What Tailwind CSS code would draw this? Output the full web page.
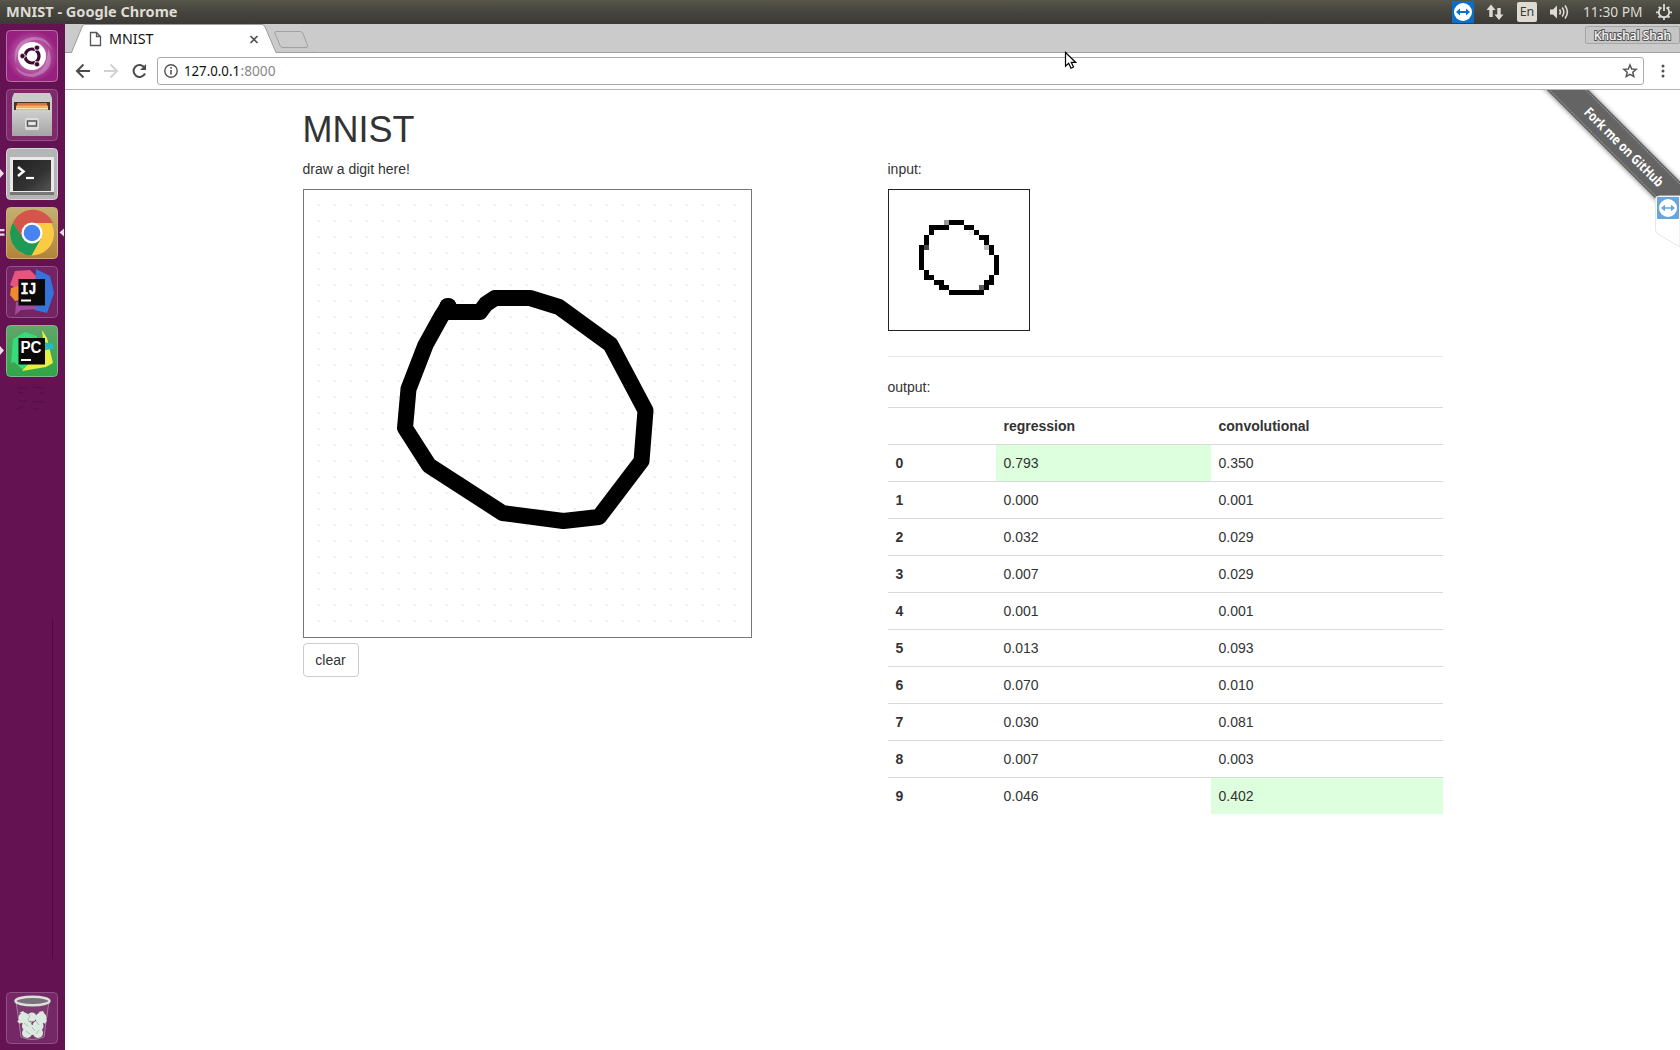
<!DOCTYPE html>
<html lang="en">
<head>
<meta charset="utf-8">
<title>MNIST</title>
<script src="https://cdn.jsdelivr.net/npm/@tailwindcss/browser@4"></script>
</head>
<body class="relative flex h-[1050px] w-[1680px] flex-col overflow-hidden bg-white font-['Liberation_Sans',sans-serif] text-sm text-[#333]">

<!-- Desktop panel -->
<header class="flex h-6 shrink-0 items-center justify-between bg-linear-to-b from-[#58564b] via-[#45443e] to-[#3b3a36] pl-[6px] pr-[7px] font-['Noto_Sans',sans-serif] text-[#dfdbd2]">
  <svg class="h-6 w-[180px]" viewBox="0 0 180 24"><text x="0" y="17" font-size="14" font-weight="700" fill="#dfdbd2" textLength="171.500" lengthAdjust="spacingAndGlyphs">MNIST - Google Chrome</text></svg>
  <div class="flex h-6 items-center">
    <svg class="mr-[12px] h-[22px] w-[22px]" viewBox="0 0 22 22"><rect width="22" height="22" fill="#0b6fc7"/><circle cx="11" cy="11" r="9" fill="#fff"/><path d="M4 11l4-3.400v2.400h6V7.600l4 3.400-4 3.400V12H8v2.400z" fill="#0b6fc7"/></svg>
    <svg class="mr-[13px] h-5 w-[18px]" viewBox="0 0 18 20" fill="#dfdbd2"><path d="M5 2.500L9.500 8H6.700v7H3.300V8H.500zM13 18L8.500 12.500h2.800V6h3.400v6.500h2.800z"/></svg>
    <div class="mr-[12px] flex h-5 w-5 items-center justify-center rounded-[2px] bg-[#dfdbd2] text-[12.500px] text-[#3c3b37]">En</div>
    <svg class="mr-[14px] h-5 w-5" viewBox="0 0 20 20" fill="none" stroke="#dfdbd2" stroke-width="1.600"><path d="M1 7.500h3l4-4v13l-4-4H1z" fill="#dfdbd2" stroke="none"/><path d="M10.500 7.500q1.800 2.500 0 5M13.200 5.500q3.300 4.500 0 9M16 3.500q4.800 6.500 0 13"/></svg>
    <svg class="mr-[12px] h-6 w-[60px]" viewBox="0 0 60 24"><text x="0" y="17" font-size="14" fill="#dfdbd2" textLength="59.500" lengthAdjust="spacingAndGlyphs">11:30 PM</text></svg>
    <svg class="h-[18px] w-[18px]" viewBox="0 0 18 18" fill="none" stroke="#dfdbd2" stroke-width="1.800"><path d="M6.500 4.500a5.200 5.200 0 1 0 5 0M9 1v7M3.800 3.800L5.300 5.300M14.200 3.800L12.700 5.300M1 9.300h2.700M17 9.300h-2.700M3.500 14.500l1.700-1.500M14.500 14.500L12.800 13M9 17v-2.600"/></svg>
  </div>
</header>

<div class="flex min-h-0 flex-1">
  <!-- Launcher -->
  <aside class="flex w-[65px] shrink-0 flex-col bg-[#651252] pb-[6px] pl-[6px] pt-[6px]">
    <div class="relative flex flex-1 flex-col gap-[7px]">
      <svg class="h-[52px] w-[52px]" viewBox="0 0 52 52">
        <defs><radialGradient id="ub"><stop offset="0" stop-color="#e7b5de"/><stop offset=".55" stop-color="#b65aa6"/><stop offset="1" stop-color="#98207f"/></radialGradient></defs>
        <rect x=".5" y=".5" width="51" height="51" rx="4" fill="url(#ub)" stroke="#b770a8"/>
        <path d="M10 34Q4 12 26 7Q42 6 46 20Q36 6 24 11Q10 16 10 34zM42 18Q52 40 28 47Q14 48 9 36Q20 48 32 42Q42 36 42 18z" fill="#fff" opacity=".25"/>
        <circle cx="26" cy="26" r="14" fill="#fff"/>
        <circle cx="26" cy="26" r="7" fill="none" stroke="#3f0a32" stroke-width="3.200" stroke-dasharray="13.660 1" stroke-dashoffset="7"/>
        <g fill="#3f0a32" stroke="#fff" stroke-width=".8"><circle cx="16.500" cy="26" r="2.700"/><circle cx="31" cy="17.700" r="2.700"/><circle cx="31" cy="34.300" r="2.700"/></g>
      </svg>
      <svg class="h-[52px] w-[52px]" viewBox="0 0 52 52">
        <defs><linearGradient id="gr" x2="0" y2="1"><stop stop-color="#cfcfcf"/><stop offset="1" stop-color="#a4a4a4"/></linearGradient></defs>
        <rect x=".5" y=".5" width="51" height="51" rx="4" fill="#7d2a6b" stroke="#96528a"/>
        <path d="M8 4h36l2 5v38H6V9z" fill="#cacaca"/><path d="M8 13h36v9H8z" fill="#4b3427"/><path d="M11 14h30v3H11z" fill="#d9743a"/><path d="M10 16.500h32V23H10z" fill="#f3b063"/><path d="M10 19.500h32" stroke="#fbe3bd"/>
        <path d="M6 21h40v26H6z" fill="url(#gr)"/><rect x="19" y="29" width="14" height="12" rx="2" fill="#ddd"/><rect x="21.500" y="32" width="9" height="5" fill="#e5e5e5" stroke="#555" stroke-width="1.500"/>
      </svg>
      <svg class="h-[52px] w-[52px]" viewBox="0 0 52 52">
        <defs><linearGradient id="te" x2="1" y2="1"><stop stop-color="#222"/><stop offset=".6" stop-color="#333"/><stop offset="1" stop-color="#555"/></linearGradient></defs>
        <rect x=".5" y=".5" width="51" height="51" rx="4" fill="#b5b5b5" stroke="#d6d6d6"/>
        <rect x="4" y="9" width="44" height="37" rx="1" fill="#e9e9e9"/><path d="M4 44h44v3H4z" fill="#777"/><rect x="7" y="12" width="38" height="31" fill="url(#te)"/>
        <path d="M12 19l5.500 4.500L12 28" fill="none" stroke="#fff" stroke-width="2.500"/><path d="M20 30h8" stroke="#fff" stroke-width="2.200"/>
      </svg>
      <svg class="h-[52px] w-[52px]" viewBox="0 0 52 52">
        <defs><linearGradient id="ch" x2="0" y2="1"><stop stop-color="#c5b072"/><stop offset="1" stop-color="#b18339"/></linearGradient></defs>
        <rect x=".5" y=".5" width="51" height="51" rx="4" fill="url(#ch)" stroke="#c9b277"/>
        <circle cx="26" cy="26.500" r="22" fill="#fbcb43"/>
        <path d="M6.950 15.500A22 22 0 0 1 47 16H26L16.500 32z" fill="#d4564a"/>
        <path d="M6.950 15.500A22 22 0 0 0 25.500 48.500L35 31.500 26 36 17 31.500z" fill="#1f9a56"/>
        <circle cx="26" cy="26" r="10.500" fill="#fff"/><circle cx="26" cy="26" r="8.300" fill="#4683f3"/>
      </svg>
      <svg class="h-[52px] w-[52px]" viewBox="0 0 52 52">
        <rect x=".5" y=".5" width="51" height="51" rx="4" fill="#742363" stroke="#94558a"/>
        <path d="M9 5l15-1 8 8-13 14L4 19z" fill="#e8547f"/><path d="M5 22l10-3 6 14-12 2-5-6z" fill="#f08a2e"/><path d="M30 3l14 7 4 17-7 20-13-3z" fill="#3474da"/><path d="M10 36l14-2 8 9-17 1-6 5z" fill="#a24a9d"/>
        <rect x="12.500" y="13" width="26.500" height="26.500" fill="#0b0808"/>
        <text x="14.500" y="27.500" font-family="Liberation Mono,monospace" font-weight="700" font-size="17" fill="#fff" stroke="#fff" stroke-width=".4" textLength="16" lengthAdjust="spacingAndGlyphs">IJ</text><path d="M15 34.500h10" stroke="#fff" stroke-width="2"/>
      </svg>
      <svg class="h-[52px] w-[52px]" viewBox="0 0 52 52">
        <defs><linearGradient id="pc" x2="0" y2="1"><stop stop-color="#62a56b"/><stop offset="1" stop-color="#2fa646"/></linearGradient></defs>
        <rect x=".5" y=".5" width="51" height="51" rx="4" fill="url(#pc)" stroke="#7db88a"/>
        <path d="M7 14l12-7 12 4v30l-14 4-9-8-3 1z" fill="#34dc7c"/><path d="M36 5l5 8 6 25-7 4-24 4 22-24z" fill="#e9ee42"/><path d="M38 17l9 2 1 5-9 1z" fill="#20bcc0"/>
        <rect x="12.500" y="13" width="26.500" height="26.500" fill="#0b0808"/>
        <text x="14.500" y="27.500" font-family="Liberation Sans,sans-serif" font-weight="700" font-size="16" fill="#fff" textLength="21" lengthAdjust="spacingAndGlyphs">PC</text><path d="M15 35h10" stroke="#fff" stroke-width="2"/>
      </svg>
      <svg class="h-[50px] w-[52px]" viewBox="0 0 52 50" fill="none" stroke="#540c49" stroke-width="1.200"><path d="M11 4h10M27 3l10 1M12 8l5 1M34 9h5M12 17h9M26 18h12M11 25l8-3M27 25h6"/></svg>
      <div class="absolute left-[46px] top-[589px] h-[340px] w-px bg-[#4c0944]"></div>
      <svg class="absolute -left-[6px] top-0 h-[360px] w-[65px]" viewBox="0 0 65 360" fill="#ead9e6"><path d="M0 139l4 4.500-4 4.500zM0 199h4.500v2.200H0zM0 203.500h4.500v2.200H0zM0 316l4 4.500-4 4.500zM64 198.500v8l-4.500-4z"/></svg>
    </div>
    <svg class="h-[52px] w-[52px]" viewBox="0 0 52 52">
      <rect x=".5" y=".5" width="51" height="51" rx="4" fill="#762766" stroke="#915186"/>
      <path d="M10 9h33l-5 36q-12 5-23 0z" fill="#7d3a6e" stroke="#a57a9d"/>
      <g fill="#dce9e0"><circle cx="18" cy="26" r="5.500"/><circle cx="26" cy="25" r="4.500"/><circle cx="35" cy="26" r="5.500"/><circle cx="21" cy="34" r="5"/><circle cx="32" cy="34" r="5.500"/><circle cx="21" cy="41" r="5"/><circle cx="32" cy="41" r="5"/><circle cx="26" cy="38" r="5"/><path d="M13 21l4-2 3 3zM32 20l5-1 2 4zM11 29l6-2-3 5zM41 28l-6 0 4 4z"/></g>
      <path d="M24 23l-2 5 4 3M30 29l3 4M18 31l4 3M26 35l3 4M20 39l4 3M33 38l-3 4" fill="none" stroke="#adbfb3"/>
      <ellipse cx="26.500" cy="9" rx="17" ry="4.200" fill="#7c6f7b" stroke="#d7e2da" stroke-width="2.500"/>
    </svg>
  </aside>

  <!-- Browser window -->
  <div class="flex min-w-0 flex-1 flex-col">
    <div class="relative flex h-[29px] shrink-0 justify-between border-b border-[#a3a3a3] bg-[#cbcbcb]">
      <svg class="-mb-px h-[29px] w-[250px] font-['Noto_Sans',sans-serif]" viewBox="0 0 250 29">
        <path d="M6.500 29L17 3q1-2.500 3-2.500h177q2 0 3 2.500l11 26z" fill="#fff"/>
        <path d="M0 28.500h6.500L17 3q1-2.500 3-2.500h177q2 0 3 2.500l11 25.500h39" fill="none" stroke="#9d9d9d"/>
        <path d="M25.500 8.500h6l4 4v9h-10zM31.500 8.500v4h4" fill="none" stroke="#555" stroke-width="1.300"/>
        <text x="44" y="20" font-size="14" fill="#111" textLength="44.500" lengthAdjust="spacingAndGlyphs">MNIST</text>
        <path d="M185.500 12l7 7M192.500 12l-7 7" stroke="#555" stroke-width="1.700"/>
        <path d="M211 7.500h24q2 0 3 2l4.500 12q.5 2-1.500 2h-23q-2 0-3-2l-5-12q-.5-2 1-2z" fill="#cbcbcb" stroke="#a0a0a0"/>
      </svg>
      <div class="mt-[2px] flex h-[18px] w-[95px] items-center justify-center rounded-[2px] border border-[#a5a5a5] bg-[#c6c6c6]">
        <svg class="h-[17px] w-[80px]" viewBox="0 0 80 17" font-family="Noto Sans,sans-serif" font-size="12.500"><text x="1" y="13" fill="#555" stroke="#555" stroke-width="2.200" textLength="77" lengthAdjust="spacingAndGlyphs" aria-hidden="true">Khushal Shah</text><text x="1" y="13" fill="#fff" stroke="#fff" stroke-width=".2" textLength="77" lengthAdjust="spacingAndGlyphs">Khushal Shah</text></svg>
      </div>
    </div>
    <div class="flex h-[37px] shrink-0 items-center border-b border-[#b4b4b4] bg-white pl-[10px]">
      <svg class="h-5 w-[74px]" viewBox="0 0 74 20" fill="none" stroke-width="2"><path d="M15 10H2.500M8.500 3.500L2 10l6.500 6.500" stroke="#4c4c4c"/><path d="M29 10h12.500M35.500 3.500L42 10l-6.500 6.500" stroke="#d2d2d2"/><path d="M69.500 6.500A6 6 0 1 0 70 12.500" stroke="#4c4c4c"/><path d="M71 3v6h-6z" fill="#4c4c4c"/></svg>
      <div class="ml-2 flex h-7 w-[1487px] items-center justify-between rounded-[3px] border border-[#ababab] pl-[6px] pr-[5px]">
        <svg class="h-[26px] w-[120px] font-['Noto_Sans',sans-serif]" viewBox="0 0 120 26"><circle cx="7" cy="13" r="6.200" fill="none" stroke="#555" stroke-width="1.400"/><path d="M7 12v4.500M7 9v1.700" stroke="#555" stroke-width="1.600"/><text x="20" y="18" font-size="14" fill="#111" textLength="56" lengthAdjust="spacingAndGlyphs">127.0.0.1</text><text x="76.500" y="18" font-size="14" fill="#888" textLength="35" lengthAdjust="spacingAndGlyphs">:8000</text></svg>
        <svg class="h-4 w-4" viewBox="0 0 16 16" fill="none" stroke="#555" stroke-width="1.500"><path d="M8 2l1.700 4 4.400.3-3.300 2.900 1 4.300L8 11.300l-3.800 2.200 1-4.300-3.300-2.900 4.400-.3z"/></svg>
      </div>
      <svg class="ml-[17px] h-[14px] w-1" viewBox="0 0 4 14" fill="#505050"><circle cx="2" cy="2" r="1.500"/><circle cx="2" cy="7" r="1.500"/><circle cx="2" cy="12" r="1.500"/></svg>
    </div>

    <main class="relative flex-1 overflow-hidden bg-white">
      <div class="ml-[237.500px] w-[1140px] pt-5">
        <h1 class="mb-[9px] h-[39.600px] text-[36px] leading-[39.600px]">MNIST</h1>
        <div class="grid grid-cols-[555px_555px] gap-[30px]">
          <section>
            <p class="mb-[10px] leading-5">draw a digit here!</p>
            <svg class="mb-[5px] block h-[449px] w-[449px]" viewBox="0 0 449 449">
              <defs><pattern id="dots" width="16" height="16" patternUnits="userSpaceOnUse"><path d="M14.500 0h1.500v1h-1.500zM0 0h1v1H0zM14.500 15h1.500v1h-1.500z" fill="#ebebeb"/></pattern></defs>
              <rect x="8" y="8" width="432" height="432" fill="url(#dots)"/>
              <rect x=".5" y=".5" width="448" height="448" fill="none" stroke="#777"/>
              <path d="M145 117L138 128 122.500 156 105.500 200 102 239 126 276.500 199.500 324 260.300 332 296 328 338.500 272 342.500 221.500 307.500 155.500 256 118 227 109H192L183 115 177 123H144" fill="none" stroke="#000" stroke-width="16" stroke-linejoin="round"/><path d="M144.500 117h1" stroke="#000" stroke-width="16" stroke-linecap="round"/>
            </svg>
            <button class="h-[34px] w-[56px] rounded-[4px] border border-[#ccc] bg-white text-sm leading-5">clear</button>
          </section>
          <section>
            <p class="mb-[10px] leading-5">input:</p>
            <svg class="block h-[142px] w-[142px]" viewBox="0 0 142 142" shape-rendering="crispEdges">
              <rect x=".5" y=".5" width="141" height="141" fill="#fff" stroke="#222"/>
              <g transform="translate(1 1) scale(5)">
                <path d="M12 6h3v1h-3zM8 7h4v1H9v1H8zM15 7h2v1h-2zM17 8h1v1h-1zM18 9h2v2h-1v-1h-1zM7 9h1v2H7zM6 11h1v5H6zM20 11h1v2h-1zM21 13h1v4h-1zM7 16h1v1h1v1H7zM20 17h1v2h-1zM9 18h2v1H9zM19 18h1v2h-1zM10 19h2v1h-2zM12 20h7v1h-7z"/>
                <path d="M11 6h1v1h-1z" fill="#999"/><path d="M16 8h1v1h-1z" fill="#eee"/><path d="M7 11h1v1H7z" fill="#484848"/><path d="M19 11h1v1h-1z" fill="#bbb"/><path d="M18 19h1v1h-1z" fill="#555"/>
              </g>
            </svg>
            <hr class="mb-5 mt-[25px] border-t border-[#e9e9e9]">
            <p class="mb-[10px] leading-5">output:</p>
            <table class="w-full table-fixed border-separate border-spacing-0 text-left leading-5 [&_td]:border-t [&_td]:border-[#d9d9d9] [&_td]:p-2 [&_th]:border-t [&_th]:border-[#d9d9d9] [&_th]:p-2">
              <colgroup><col class="w-[108px]"><col class="w-[215px]"><col></colgroup>
              <tr><th></th><th>regression</th><th>convolutional</th></tr>
              <tr><th>0</th><td class="bg-[#dfd]">0.793</td><td>0.350</td></tr>
              <tr><th>1</th><td>0.000</td><td>0.001</td></tr>
              <tr><th>2</th><td>0.032</td><td>0.029</td></tr>
              <tr><th>3</th><td>0.007</td><td>0.029</td></tr>
              <tr><th>4</th><td>0.001</td><td>0.001</td></tr>
              <tr><th>5</th><td>0.013</td><td>0.093</td></tr>
              <tr><th>6</th><td>0.070</td><td>0.010</td></tr>
              <tr><th>7</th><td>0.030</td><td>0.081</td></tr>
              <tr><th>8</th><td>0.007</td><td>0.003</td></tr>
              <tr><th>9</th><td>0.046</td><td class="bg-[#dfd]">0.402</td></tr>
            </table>
          </section>
        </div>
      </div>

      <!-- Corner ribbon and remote-control tab -->
      <svg class="absolute right-0 top-0 h-[160px] w-[150px]" viewBox="0 0 150 160">
        <defs><filter id="sh" x="-20%" y="-50%" width="140%" height="200%"><feGaussianBlur stdDeviation="2.200"/></filter></defs>
        <g transform="translate(94.500 56.500) rotate(45)">
          <rect x="-140" y="-15" width="280" height="31" fill="#000" opacity=".4" filter="url(#sh)"/>
          <rect x="-140" y="-14.500" width="280" height="29.500" fill="#646464"/>
          <path d="M-140-12.500h280M-140 13h280" stroke="#aaa" stroke-width=".8" stroke-dasharray="2 1"/>
          <text x="-53" y="5.500" font-family="Noto Sans,sans-serif" font-size="13.500" font-weight="700" fill="#fff" textLength="106" lengthAdjust="spacingAndGlyphs">Fork me on GitHub</text>
        </g>
        <path d="M125.500 109q0-3 4-3H150v51l-22-13q-2.500-2-2.500-4z" fill="#fff" stroke="#e6e6e6"/>
        <rect x="127" y="107" width="22" height="22" rx="1" fill="#69a5dc"/><circle cx="138" cy="118" r="9" fill="#fff"/><path d="M131 118l4-3.200v2.400h6v-2.400l4 3.200-4 3.200v-2.400h-6v2.400z" fill="#69a5dc"/>
      </svg>
    </main>
  </div>
</div>

<!-- Mouse pointer -->
<svg class="absolute left-[1064px] top-[51px] h-[19px] w-[13px]" viewBox="0 0 13 19"><path d="M1.500 1.500v13.700l3.200-3 2.300 5 2.500-1.200-2.200-4.700h4.300z" fill="#fff" stroke="#000" stroke-width="1.200"/></svg>
</body>
</html>
